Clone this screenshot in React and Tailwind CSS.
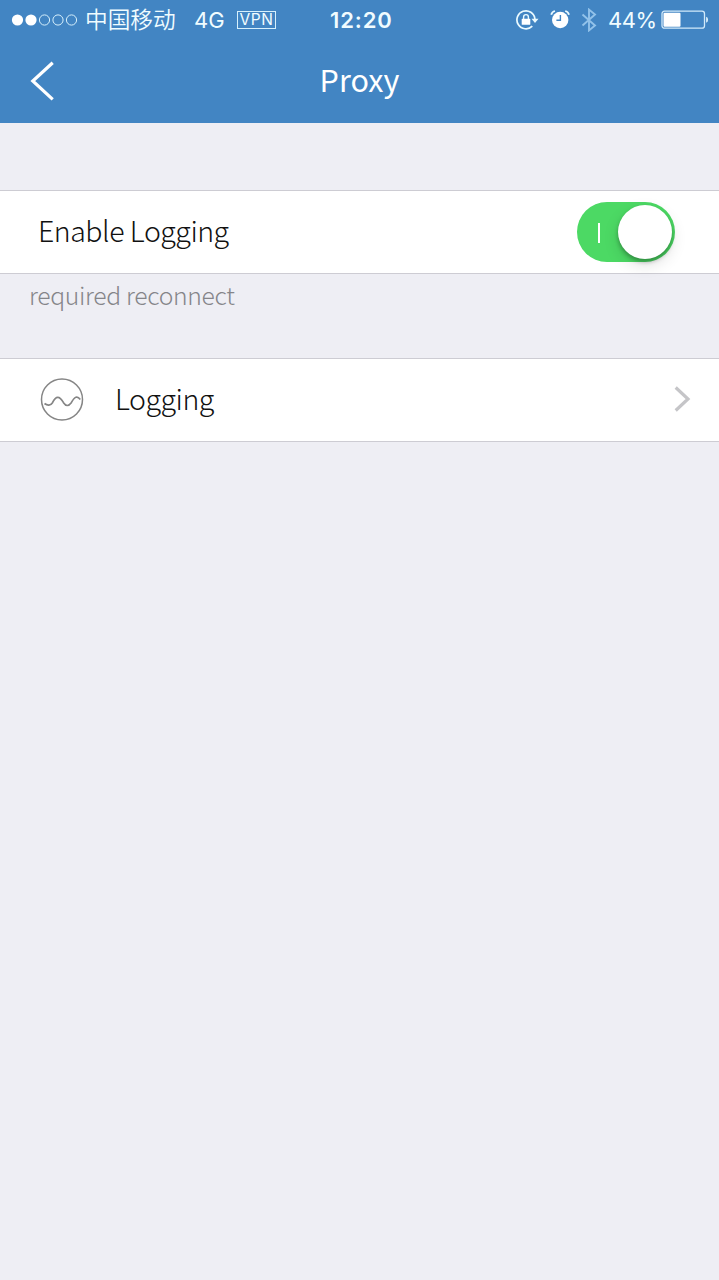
const CJK = "font-['Noto_Sans_CJK_SC',sans-serif]";
const INTER = "font-['Inter',sans-serif]";

function SignalDots() {
  return (
    <svg className="ml-[11px] h-[14px] w-[67px] shrink-0" viewBox="0 0 67 14" fill="none">
      <circle cx="6.5" cy="7" r="5.6" fill="#fff" />
      <circle cx="20" cy="7" r="5.6" fill="#fff" />
      <circle cx="33.5" cy="7" r="5.1" stroke="#d6f0fc" />
      <circle cx="47" cy="7" r="5.1" stroke="#d6f0fc" />
      <circle cx="60.5" cy="7" r="5.1" stroke="#d6f0fc" />
    </svg>
  );
}

function RotationLock() {
  return (
    <svg className="h-[22px] w-[24px] shrink-0" viewBox="0 0 24 22" fill="none" stroke="#eafaff" strokeWidth="1.7">
      <path d="M17.3 17.2A9 9 0 1 1 19.9 10" />
      <path d="M16.5 9.7h7l-3.5 4.3z" fill="#eafaff" stroke="none" />
      <rect x="6.7" y="9.8" width="8.6" height="6" rx=".6" fill="#fff" stroke="none" />
      <path d="M8.6 10V8a2.4 2.4 0 0 1 4.8 0v2" strokeWidth="1.4" />
    </svg>
  );
}

function Alarm() {
  return (
    <svg className="h-[20px] w-[20px] shrink-0" viewBox="0 0 20 20" fill="none">
      <circle cx="10.2" cy="10" r="8.2" fill="#fff" />
      <path d="M10.4 5v5.3H6.4" stroke="#4285c3" strokeWidth="1.4" />
      <path d="M1.2 4.7Q2 1.8 5 1M15.2 1q3 .8 3.8 3.7" stroke="#eafaff" strokeWidth="1.8" />
    </svg>
  );
}

function Bluetooth() {
  return (
    <svg className="h-[24px] w-[16px] shrink-0" viewBox="0 0 16 24" fill="none" stroke="#92c2ea" strokeWidth="1.9">
      <path d="M1.5 6.5l12.5 11L8 22.4V1.6l6 4.9-12.5 11" />
    </svg>
  );
}

function Battery() {
  return (
    <svg className="h-[20px] w-[48px] shrink-0" viewBox="0 0 48 20" fill="none">
      <rect x="1" y="1.2" width="42.5" height="17" rx="2.5" stroke="#d2eafa" strokeWidth="1.3" />
      <rect x="2.5" y="2.7" width="17" height="14" rx="1" fill="#fff" />
      <path d="M45.2 6.7q1.8.6 1.8 3t-1.8 3z" fill="#eafaff" />
    </svg>
  );
}

function StatusBar() {
  return (
    <div className="grid h-10 grid-cols-[330px_64px_1fr] items-center text-[#f0fcff]">
      <div className="flex items-center">
        <SignalDots />
        <span className={`${CJK} ml-[7px] w-[92px] pb-[2px] text-[22.7px] leading-[38px] font-[350] whitespace-nowrap`}>中国移动</span>
        <span className={`${INTER} ml-[17px] w-[32px] text-[22px] leading-10 whitespace-nowrap`}>4G</span>
        <span className={`${INTER} ml-[11px] flex h-[18px] w-[39px] items-center justify-center border border-[#d6f0fc] text-[15.5px] leading-none tracking-[0.6px]`}>VPN</span>
      </div>
      <span className={`${INTER} text-[22px] leading-10 font-semibold tracking-[0.9px] whitespace-nowrap`}>12:20</span>
      <div className="flex items-center">
        <div className="ml-[121px] flex"><RotationLock /></div>
        <div className="ml-[11px] flex"><Alarm /></div>
        <div className="ml-[11px] flex"><Bluetooth /></div>
        <span className={`${INTER} ml-[11px] w-[50px] text-[22px] leading-10 tracking-[-0.4px] whitespace-nowrap`}>44%</span>
        <div className="ml-[3px] flex"><Battery /></div>
      </div>
    </div>
  );
}

function NavBar() {
  return (
    <div className="grid h-[83px] grid-cols-[120px_1fr_120px] items-center">
      <button aria-label="Back" className="flex pb-[2px] pl-[30px]">
        <svg className="h-[40px] w-[26px]" viewBox="0 0 26 40" fill="none" stroke="#fff" strokeWidth="3.2">
          <path d="M22.7 1.7L2.8 20l19.9 18.4" />
        </svg>
      </button>
      <h1 className={`${CJK} pb-[6px] text-center text-[30.5px] leading-[74px] text-white`}>Proxy</h1>
    </div>
  );
}

function Toggle() {
  return (
    <button role="switch" aria-checked="true" aria-label="Enable Logging" className="mr-[44px] flex h-[60px] w-[98px] items-center justify-between rounded-full bg-[#4cd964] pr-[3px] pl-[21px]">
      <span className="mt-[2px] h-[20px] w-[2px] bg-white" />
      <span className="h-[54px] w-[54px] rounded-full bg-white shadow-[0_3px_4px_rgba(0,0,0,0.28),0_6px_16px_rgba(0,0,0,0.12)]" />
    </button>
  );
}

export default function App() {
  return (
    <div className="min-h-[1280px] w-full bg-[#eeeef4]">
      <header className="h-[123px] bg-[#4285c3]">
        <StatusBar />
        <NavBar />
      </header>
      <main className="pt-[67px]">
        <section className="flex h-[84px] items-center justify-between border-y border-[#cdccd3] bg-white">
          <span className={`${CJK} ml-[38px] pb-[4px] text-[28.5px] leading-[76px] font-light tracking-[-0.48px] text-[#111]`}>Enable Logging</span>
          <Toggle />
        </section>
        <p className={`${CJK} ml-[29px] h-[84px] text-[24.7px] leading-[41px] font-light tracking-[-0.33px] text-[#858589]`}>required reconnect</p>
        <section className="flex h-[84px] items-center border-y border-[#cdccd3] bg-white">
          <svg className="ml-[40px] h-[44px] w-[44px]" viewBox="0 0 44 44" fill="none" stroke="#858585" strokeWidth="1.5">
            <circle cx="22" cy="21.5" r="20.5" />
            <path d="M4.5 25.5c3 2.3 6 2.3 8-.8 3.4-7 7-7 11 0 2.5 3.7 5 3.7 7.8 0 3.3-6.3 6-7.2 9-3.2" strokeWidth="1.7" />
          </svg>
          <span className={`${CJK} ml-[31px] pb-[4px] text-[28.5px] leading-[76px] font-light tracking-[-0.48px] text-[#111]`}>Logging</span>
          <svg className="mr-[28px] mb-[2px] ml-auto h-[28px] w-[18px]" viewBox="0 0 18 28" fill="none" stroke="#c5c5c8" strokeWidth="3.2">
            <path d="M2.7 2.5L15 14 2.7 25.5" />
          </svg>
        </section>
      </main>
    </div>
  );
}
